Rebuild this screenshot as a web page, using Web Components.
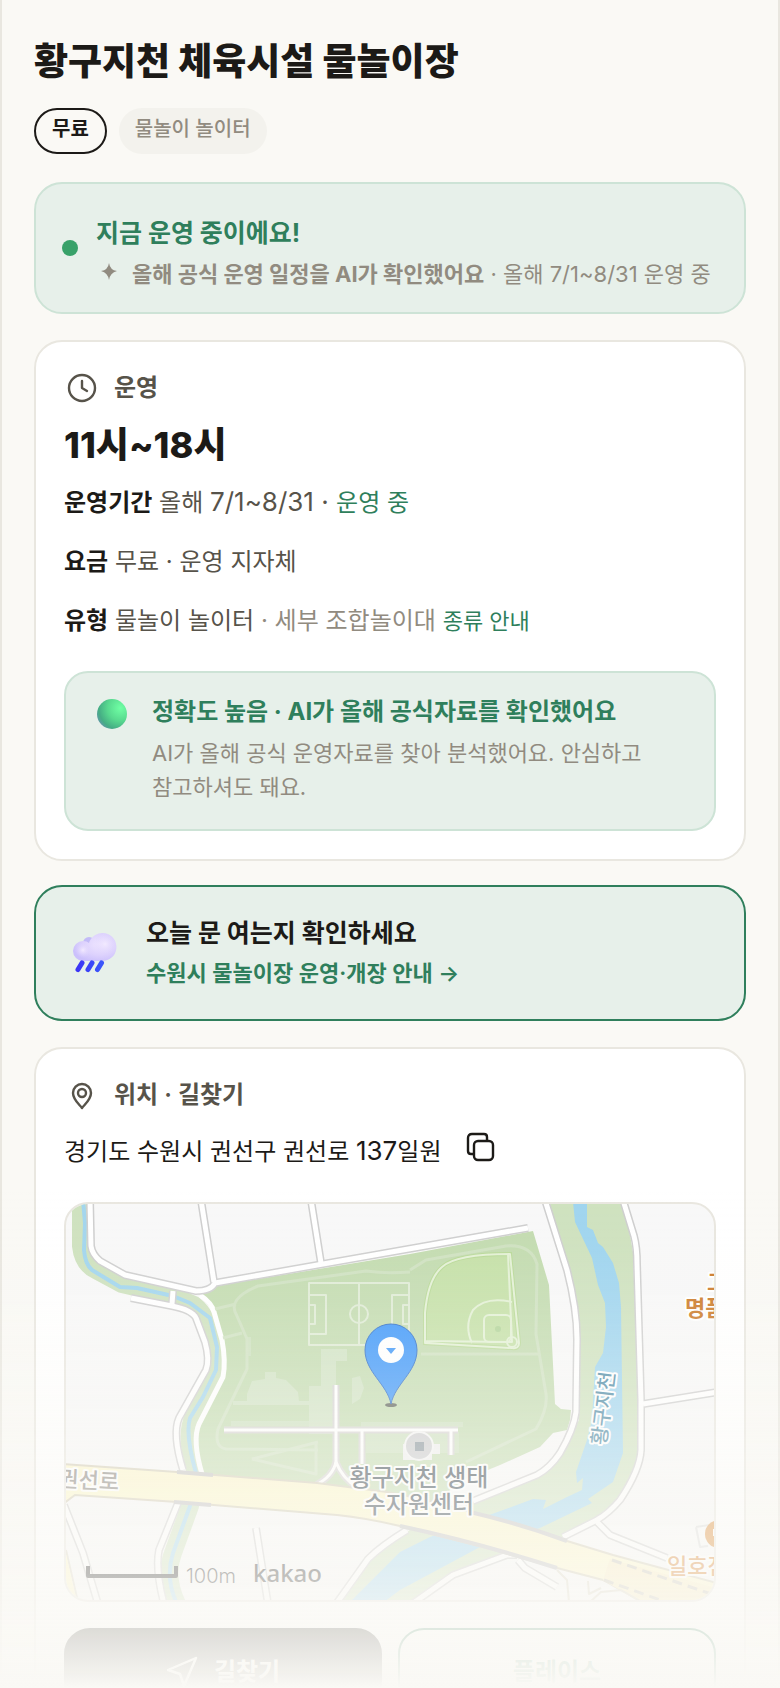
<!DOCTYPE html>
<html lang="ko">
<head>
<meta charset="UTF-8">
<meta name="viewport" content="width=device-width, initial-scale=1">
<title>황구지천 체육시설 물놀이장</title>
<style>
    :root {
        --bg: #faf9f5;
        --line: #e9e7e0;
        --ink: #1c1a17;
        --sub: #57534a;
        --muted: #918b80;
        --green: #2f7f5c;
        --mint: #e7f0ea;
        --mint-line: #cde3d6;
    }
    body {
        margin: 0;
        background: var(--bg);
        color: var(--ink);
        font-family: Inter, "Noto Sans CJK KR", sans-serif;
        font-size: 24px;
        line-height: 44px;
    }
    .muted {
        color: var(--muted);
    }
    .green {
        color: var(--green);
    }
    .num {
        font-size: 26px;
    }
</style>
</head>
<body>

<place-page>
    <place-header>
        <span slot="name">황구지천 체육시설 물놀이장</span>
        <place-badge strong>무료</place-badge>
        <place-badge>물놀이 놀이터</place-badge>
    </place-header>

    <status-banner>
        <span slot="title">지금 운영 중이에요!</span>
        <b>올해 공식 운영 일정을 AI가 확인했어요</b> · 올해 7/1~8/31 운영 중
    </status-banner>

    <info-card icon="clock" label="운영">
        <open-hours>11시~18시</open-hours>
        <fact-row label="운영기간">올해 <span class="num">7/1~8/31 · </span><span class="green">운영 중</span></fact-row>
        <fact-row label="요금">무료 · 운영 지자체</fact-row>
        <fact-row label="유형">물놀이 놀이터 <span class="muted">· 세부 조합놀이대</span> <guide-link>종류 안내</guide-link></fact-row>
        <accuracy-note>
            <span slot="title">정확도 높음 · AI가 올해 공식자료를 확인했어요</span>
            AI가 올해 공식 운영자료를 찾아 분석했어요. 안심하고 참고하셔도 돼요.
        </accuracy-note>
    </info-card>

    <notice-link>
        <span slot="title">오늘 문 여는지 확인하세요</span>
        수원시 물놀이장 운영·개장 안내 →
    </notice-link>

    <info-card icon="pin" label="위치 · 길찾기">
        <address-line>경기도 수원시 권선구 권선로 <span class="num">137</span>일원</address-line>
        <place-map></place-map>
        <action-bar></action-bar>
    </info-card>
</place-page>

<script>
class PlacePage extends HTMLElement {

    constructor() {
        super()
        this.shadowDOM = this.attachShadow({mode : "open"})
    }

    connectedCallback() {
        this.render()
    }

    render() {
        this.shadowDOM.innerHTML = `
            <style>
            :host {
                display: block;
                height: 100vh;
                overflow: hidden;
            }
            main {
                display: flex;
                flex-direction: column;
                gap: 26px;
                padding: 39px 32px 0;
                border: solid var(--line);
                border-width: 0 2px;
            }
            .fade {
                position: fixed;
                left: 0;
                right: 0;
                bottom: 0;
                height: 500px;
                pointer-events: none;
                background: linear-gradient(rgba(250, 249, 245, 0), rgba(250, 249, 245, .03) 12%, rgba(250, 249, 245, .13) 22%, rgba(250, 249, 245, .35) 42%, rgba(250, 249, 245, .54) 58%, rgba(250, 249, 245, .71) 77%, rgba(250, 249, 245, .87) 88%, var(--bg));
            }
            </style>

            <main><slot></slot></main>
            <div class="fade"></div>
        `
    }

}
customElements.define("place-page", PlacePage)

class PlaceHeader extends HTMLElement {

    constructor() {
        super()
        this.shadowDOM = this.attachShadow({mode : "open"})
    }

    connectedCallback() {
        this.shadowDOM.innerHTML = `
            <style>
            :host {
                display: block;
            }
            h1 {
                margin: 0 0 23px;
                font-size: 37px;
                line-height: 46px;
                font-weight: 800;
            }
            .badges {
                display: flex;
                gap: 12px;
            }
            </style>

            <h1><slot name="name"></slot></h1>
            <div class="badges"><slot></slot></div>
        `
    }

}
customElements.define("place-header", PlaceHeader)

class PlaceBadge extends HTMLElement {

    constructor() {
        super()
        this.shadowDOM = this.attachShadow({mode : "open"})
    }

    connectedCallback() {
        this.shadowDOM.innerHTML = `
            <style>
            :host {
                display: block;
                padding: 8px 16px 12px;
                border-radius: 23px;
                background: #f3f2ed;
                color: var(--muted);
                font-size: 20px;
                line-height: 26px;
                font-weight: 500;
            }
            :host([strong]) {
                padding: 6px 16px 10px;
                border: 2px solid var(--ink);
                background: none;
                color: var(--ink);
                font-weight: 700;
            }
            </style>

            <slot></slot>
        `
    }

}
customElements.define("place-badge", PlaceBadge)

class StatusBanner extends HTMLElement {

    constructor() {
        super()
        this.shadowDOM = this.attachShadow({mode : "open"})
    }

    connectedCallback() {
        this.shadowDOM.innerHTML = `
            <style>
            :host {
                display: flex;
                gap: 18px;
                margin-top: 2px;
                padding: 30px 26px 16px;
                border: 2px solid var(--mint-line);
                border-radius: 28px;
                background: var(--mint);
            }
            .dot {
                flex: none;
                width: 16px;
                height: 16px;
                margin-top: 26px;
                border-radius: 50%;
                background: #38a169;
            }
            .title {
                color: var(--green);
                font-size: 25px;
                line-height: 38px;
                font-weight: 700;
            }
            .detail {
                display: flex;
                gap: 8px;
                color: var(--muted);
                font-size: 22px;
            }
            svg {
                flex: none;
                width: 28px;
                height: 40px;
            }
            </style>

            <span class="dot"></span>
            <div>
                <div class="title"><slot name="title"></slot></div>
                <div class="detail">
                    <svg viewBox="0 0 28 40" fill="currentColor"><path d="M13 11q1 7 8 8-7 2-8 9-1-7-8-9 7-1 8-8z"/></svg>
                    <div><slot></slot></div>
                </div>
            </div>
        `
    }

}
customElements.define("status-banner", StatusBanner)

const icons = {
    clock: `<circle cx="18" cy="18" r="13"/><path d="M18 11v7l5 3"/>`,
    pin: `<path d="M18 31c-2-3-9-8-9-15a9 9 0 0 1 18 0c0 7-7 12-9 15z"/><circle cx="18" cy="16" r="4"/>`
}

class InfoCard extends HTMLElement {

    constructor() {
        super()
        this.shadowDOM = this.attachShadow({mode : "open"})
    }

    connectedCallback() {
        this.shadowDOM.innerHTML = `
            <style>
            :host {
                display: block;
                padding: 28px;
                border: 2px solid var(--line);
                border-radius: 28px;
                background: #fff;
            }
            h2 {
                display: flex;
                align-items: center;
                gap: 14px;
                margin: 0 0 16px;
                color: var(--sub);
                font-size: 24px;
                line-height: 36px;
                font-weight: 600;
            }
            svg {
                width: 36px;
                height: 36px;
                fill: none;
                stroke: currentColor;
                stroke-width: 2.4;
                stroke-linecap: round;
                stroke-linejoin: round;
            }
            </style>

            <h2><svg viewBox="0 0 36 36">${icons[this.getAttribute("icon")]}</svg>${this.getAttribute("label")}</h2>
            <slot></slot>
        `
    }

}
customElements.define("info-card", InfoCard)

class OpenHours extends HTMLElement {

    constructor() {
        super()
        this.shadowDOM = this.attachShadow({mode : "open"})
    }

    connectedCallback() {
        this.shadowDOM.innerHTML = `
            <style>
            :host {
                display: block;
                margin-bottom: 12px;
                font-size: 36px;
                line-height: 46px;
                font-weight: 800;
            }
            </style>

            <slot></slot>
        `
    }

}
customElements.define("open-hours", OpenHours)

class FactRow extends HTMLElement {

    constructor() {
        super()
        this.shadowDOM = this.attachShadow({mode : "open"})
    }

    connectedCallback() {
        this.shadowDOM.innerHTML = `
            <style>
            :host {
                display: block;
                margin-bottom: 15px;
                color: var(--sub);
            }
            b {
                color: var(--ink);
            }
            </style>

            <b>${this.getAttribute("label")}</b> <slot></slot>
        `
    }

}
customElements.define("fact-row", FactRow)

class GuideLink extends HTMLElement {

    constructor() {
        super()
        this.shadowDOM = this.attachShadow({mode : "open"})
    }

    connectedCallback() {
        this.shadowDOM.innerHTML = `
            <style>
            :host {
                display: inline;
            }
            a {
                color: var(--green);
                font-size: 22px;
                text-decoration: none;
            }
            </style>

            <a href="#guide"><slot></slot></a>
        `
    }

}
customElements.define("guide-link", GuideLink)

class AccuracyNote extends HTMLElement {

    constructor() {
        super()
        this.shadowDOM = this.attachShadow({mode : "open"})
    }

    connectedCallback() {
        this.shadowDOM.innerHTML = `
            <style>
            :host {
                display: flex;
                gap: 24px;
                margin-top: 28px;
                padding: 22px 30px 25px;
                border: 2px solid var(--mint-line);
                border-radius: 24px;
                background: var(--mint);
                word-break: keep-all;
            }
            svg {
                flex: none;
                width: 32px;
                height: 38px;
            }
            .title {
                margin-bottom: 7px;
                color: var(--green);
                font-size: 24px;
                line-height: 34px;
                font-weight: 700;
            }
            .detail {
                max-width: 500px;
                color: var(--muted);
                font-size: 22px;
                line-height: 34px;
            }
            </style>

            <svg viewBox="0 0 32 38">
                <defs>
                    <radialGradient id="orb" cx=".78" cy=".3" r=".85">
                        <stop offset="0" stop-color="#70ffa4"/>
                        <stop offset=".5" stop-color="#58d98f"/>
                        <stop offset=".85" stop-color="#45ad84"/>
                        <stop offset="1" stop-color="#5f9aa5"/>
                    </radialGradient>
                </defs>
                <circle cx="16" cy="19" r="15" fill="url(#orb)"/>
            </svg>
            <div>
                <div class="title"><slot name="title"></slot></div>
                <div class="detail"><slot></slot></div>
            </div>
        `
    }

}
customElements.define("accuracy-note", AccuracyNote)

class NoticeLink extends HTMLElement {

    constructor() {
        super()
        this.shadowDOM = this.attachShadow({mode : "open"})
    }

    connectedCallback() {
        this.shadowDOM.innerHTML = `
            <style>
            :host {
                display: block;
                margin-top: -2px;
            }
            a {
                display: flex;
                align-items: center;
                gap: 22px;
                padding: 26px 28px;
                border: 2px solid var(--green);
                border-radius: 28px;
                background: var(--mint);
                color: var(--green);
                font-size: 22px;
                line-height: 40px;
                font-weight: 600;
                text-decoration: none;
            }
            svg {
                flex: none;
                width: 60px;
                height: 60px;
            }
            .title {
                color: var(--ink);
                font-size: 25px;
                font-weight: 700;
            }
            </style>

            <a href="#notice">
                <svg viewBox="0 0 60 60">
                    <defs>
                        <radialGradient id="puff" cx=".62" cy=".4" r=".65">
                            <stop offset="0" stop-color="#efe6ff"/>
                            <stop offset=".6" stop-color="#ddd2fd"/>
                            <stop offset="1" stop-color="#cbc0fc"/>
                        </radialGradient>
                        <radialGradient id="shine">
                            <stop offset="0" stop-color="#f2eaff"/>
                            <stop offset="1" stop-color="#ddd2fd" stop-opacity="0"/>
                        </radialGradient>
                        <linearGradient id="drop" x1="0" x2="1">
                            <stop offset="0" stop-color="#3b35f5"/>
                            <stop offset="1" stop-color="#3b55fa"/>
                        </linearGradient>
                    </defs>
                    <circle cx="25" cy="20" r="6" fill="#c3bbf8"/>
                    <path d="M19 38A10 10 0 0 1 19 18Q23 18 25 20A14 14 0 1 1 38 38z" fill="url(#puff)"/>
                    <circle cx="41" cy="21" r="11" fill="url(#shine)"/>
                    <circle cx="19" cy="27" r="8" fill="url(#shine)"/>
                    <g stroke="url(#drop)" stroke-width="5" stroke-linecap="round">
                        <path d="M18 40l-4 6.500M28 40l-4 6.500M37.500 40l-4 6.500"/>
                    </g>
                </svg>
                <div>
                    <div class="title"><slot name="title"></slot></div>
                    <slot></slot>
                </div>
            </a>
        `
    }

}
customElements.define("notice-link", NoticeLink)

class AddressLine extends HTMLElement {

    constructor() {
        super()
        this.shadowDOM = this.attachShadow({mode : "open"})
    }

    connectedCallback() {
        this.shadowDOM.innerHTML = `
            <style>
            :host {
                display: flex;
                gap: 20px;
                margin-bottom: 28px;
            }
            button {
                width: 36px;
                height: 36px;
                padding: 0;
                border: 0;
                background: none;
                color: var(--ink);
            }
            svg {
                display: block;
                fill: none;
                stroke: currentColor;
                stroke-width: 2.400;
                stroke-linejoin: round;
            }
            </style>

            <span><slot></slot></span>
            <button type="button" aria-label="주소 복사">
                <svg width="36" height="36" viewBox="0 0 36 36">
                    <rect x="12" y="12" width="19" height="19" rx="4"/>
                    <path d="M12 25H9q-3 0-3-3V9q0-4 4-4h12q3 0 3 3v3"/>
                </svg>
            </button>
        `
    }

}
customElements.define("address-line", AddressLine)

// roads are drawn twice: a grey casing first, the white surface over it
const roads = `
    <path d="M24-4L25 42Q26 50 34 57L59 71 130 87Q145 87 149 79L462 24"/>
    <path d="M135-4L148 78M245-4L255 59M107 87L106 100"/>
    <path d="M65 94L106 102Q126 106 130 114L139 138Q144 156 140 166L113 214Q106 230 117 266"/>
    <path d="M479-4L501 66Q511 105 511 135L510 208Q508 225 494 249 484 264 471 271L407 297"/>
    <path d="M557-4L568 32Q571 43 571 60L575 196V246Q574 266 554 296 543 309 531 316L497 333"/>
    <path d="M577 200L652 188M531 318L544 331 601 354"/>
    <path d="M341 326Q315 342 302 355L270 400M451 351H441L387 371 346 400M452 356L459 364 491 383"/>
    <path d="M-2 301L17 349 32 400M112 299L93 346Q89 365 98 400M190 324L202 400"/>
`
const parkRoads = `
    <path d="M158 226H392M270 181V262M296 226V260M385 226V251"/>
    <path d="M270 258Q267 272 250 281M270 258Q276 274 292 284"/>
`

class PlaceMap extends HTMLElement {

    constructor() {
        super()
        this.shadowDOM = this.attachShadow({mode : "open"})
    }

    connectedCallback() {
        this.render()
    }

    render() {
        this.shadowDOM.innerHTML = `
            <style>
            :host {
                display: block;
                overflow: hidden;
                height: 396px;
                border: 2px solid var(--line);
                border-radius: 24px;
                background: #f8f8f8;
            }
            svg {
                display: block;
                width: 100%;
                height: 100%;
            }
            .line {
                fill: none;
                stroke-linejoin: round;
            }
            text {
                font-family: Inter, "Noto Sans CJK KR", sans-serif;
                paint-order: stroke;
                stroke: #fff;
                stroke-width: 4;
                stroke-linejoin: round;
            }
            .plain {
                stroke: none;
            }
            </style>

            <svg viewBox="0 0 648 396" preserveAspectRatio="xMidYMid slice" role="img" aria-label="지도">
                <!-- west stream -->
                <g class="line">
                    <path d="M15-4V42Q17 60 30 66L56 80 107 92 128 101Q142 112 148 140V166L128 212Q118 232 130 269L124 302 107 349Q98 372 111 400" stroke="#cfe2bf" stroke-width="18"/>
                    <path d="M17-4L19 19 18 46Q19 60 26 66L54 83 71 84 107 92 124 99 144 114 151 143 150 166 137 193 124 214Q119 230 130 269L124 302 107 349Q99 374 111 400" stroke="#a3d6ee" stroke-width="4"/>
                </g>
                <!-- river -->
                <path d="M483-4L507 83 514 133 513 216 497 246 474 271 407 298 344 326 302 353 272 400H342L387 369 441 351 497 333 544 309 564 286 572 263 573 216 567 48 564 31 554-4z" fill="#cfe2bf"/>
                <path d="M507-2L509 18 526 54 532 81 539 99 540 123 537 149 529 163 526 216 521 236 510 268 511 279 517 274 516 286 501 293 477 305 480 296 467 295 426 310 364 333 334 348 284 398H318L334 386 414 343 474 324 526 299 522 295 547 278 557 249 555 103 553 79 547 59 537 43 532 39 527 26 521 23V-2z" fill="#a0d5ef"/>
                <!-- park -->
                <path d="M149 82L344 50 467 27 483 81 489 200 495 205 505 206 504 216 501 226 487 229 474 243 434 261 400 275 350 310 136 275 129 229 157 173 158 150 150 110 134 92z" fill="#c4dcb1"/>
                <path d="M134 91Q146 99 148 108L156 136Q160 158 157 173L133 220Q126 236 136 270" class="line" stroke="#fff" stroke-width="5"/>
                <g fill="#d1e3c4">
                    <path d="M181 190L186 177 199 175V168H210V174L220 176 232 188 233 197H181zM255 145H281V157H270V198H255zM243 182H270V230H243zM286 174L294 172 298 184 294 195 286 200zM167 197H245V201H167z"/>
                    <path d="M295 218H397V223H295zM165 217H243V222H165zM300 228H393V249H300zM180 133H185V152H180z" opacity=".7"/>
                </g>
                <g class="line" stroke="#d0e2c2" stroke-width="3">
                    <path d="M149 105L170 100M157 134L176 129M344 68Q320 70 300 67L192 82Q160 95 171 112L181 135V165L152 225Q148 243 160 245L252 246M344 66L360 56 440 42Q465 40 471 60L470 130 480 190Q482 205 470 225L400 258M355 150H474M186 255L252 238M186 255L250 270V238"/>
                </g>
                <g class="line" stroke="#e0ecd6" stroke-width="2">
                    <path d="M243 79H343V141H243zM293 79V141M243 91H260V130H243M243 101H249V120H243M343 91H326V130H343M343 101H337V120H343"/>
                    <circle cx="293" cy="110" r="9"/>
                </g>
                <path d="M359 139V109Q362 75 376 63 390 50 444 50L453 139Q453 145 446 144z" fill="#c6e1a9" stroke="#b9d998" stroke-width="4"/>
                <g class="line" stroke="#e4f1d6" stroke-width="2">
                    <path d="M359 139V109Q362 75 376 63 390 50 444 50L453 139Q453 145 446 144zM442 50L446 138 359 137M406 139Q398 122 407 106 420 92 446 98"/>
                    <rect x="418" y="111" width="27" height="27" rx="5"/>
                    <circle cx="446" cy="138" r="5"/>
                </g>
                <circle cx="432" cy="125" r="3" fill="#b3d59b"/>
                <!-- streets -->
                <g class="line" stroke="#cfcfcf" stroke-width="8">${roads}</g>
                <g class="line" stroke="#fff" stroke-width="5">${roads}</g>
                <g class="line" stroke="#d6d4d3" stroke-width="7">${parkRoads}</g>
                <g class="line" stroke="#fff" stroke-width="3">${parkRoads}</g>
                <!-- main road and its bridges -->
                <path d="M-3 260L111 268 251 279 321 288Q370 297 404 308L454 321 501 337 547 351 651 379V400H580L537 376 491 364 417 343 334 322Q300 314 271 311L111 298 9 291-3 300z" fill="#fdf7c9" stroke="#d3cdb6" stroke-width="2"/>
                <path d="M544 355L537 376 574 398H650V384z" fill="#fbeec1"/>
                <path d="M546 356L645 390M538 376L600 398" class="line" stroke="#c9c5b8" stroke-width="3" stroke-dasharray="10 6"/>
                <path d="M491 366L501 376 503 398M522 377L523 390 535 384M524 398L535 388 555 386 574 397M0 346L12 398" class="line" stroke="#ddd8c8" stroke-width="2"/>
                <path d="M0 350L11 398H0z" fill="#fdf7c9"/>
                <path d="M111 268L147 271M108 298L145 301M404 308Q455 320 501 337M334 322Q410 338 491 364" class="line" stroke="#c4c3c2" stroke-width="4"/>
                <!-- facility -->
                <path d="M337 240H374V250H366V256H337z" fill="#efefef"/>
                <circle cx="353" cy="242" r="14" fill="#cbccce" stroke="#f4f4f4" stroke-width="2"/>
                <rect x="349" y="238" width="9" height="9" fill="#85929a"/>
                <path d="M630 323L643 321M630 323L634 343 642 342" class="line" stroke="#ddd" stroke-width="2"/>
                <circle cx="653" cy="330" r="14" fill="#dd8f3d"/>
                <rect x="647" y="325" width="6" height="7" fill="#fff"/>
                <!-- labels -->
                <g font-size="24" font-weight="500" fill="#3a4851" text-anchor="middle">
                    <text x="353" y="282">황구지천 생태</text>
                    <text x="353" y="309">수자원센터</text>
                </g>
                <text x="502" y="213" transform="rotate(-83 537 206)" font-size="20" font-weight="500" fill="#4d8aa6">황구지천</text>
                <text x="-8" y="283" transform="rotate(3 0 283)" font-size="22" font-weight="500" fill="#85817a">권선로</text>
                <g font-size="22" font-weight="600" fill="#cb7a28">
                    <text x="641" y="86">고</text>
                    <text x="619" y="112">명품</text>
                    <text x="601" y="370" font-weight="500" fill="#d98633">일호점</text>
                </g>
                <path d="M22 362V372H110V362" class="line" stroke="#333" stroke-width="4"/>
                <g fill="#333">
                    <text class="plain" x="120" y="379" font-size="20" font-weight="300">100m</text>
                    <text class="plain" x="187" y="378" font-size="24" font-weight="500" style="font-family: 'Noto Sans', sans-serif">kakao</text>
                </g>
                <!-- marker -->
                <ellipse cx="325" cy="201" rx="6" ry="2" fill="#444" opacity=".8"/>
                <path d="M325 200C321 180 299 168 299 146A26 26 0 0 1 351 146C351 168 329 180 325 200z" fill="#3f98fa" stroke="#2f6fc8"/>
                <circle cx="325" cy="146" r="13" fill="#fff"/>
                <path d="M320 144H330L325 150z" fill="#3f98fa"/>
            </svg>
        `
    }

}
customElements.define("place-map", PlaceMap)

class ActionBar extends HTMLElement {

    constructor() {
        super()
        this.shadowDOM = this.attachShadow({mode : "open"})
    }

    connectedCallback() {
        this.shadowDOM.innerHTML = `
            <style>
            :host {
                display: grid;
                grid-template-columns: 1fr 1fr;
                gap: 16px;
                margin-top: 26px;
            }
            button {
                display: flex;
                align-items: center;
                justify-content: center;
                gap: 16px;
                height: 88px;
                border: 2px solid var(--green);
                border-radius: 26px;
                background: #fff;
                color: var(--green);
                font: inherit;
                font-weight: 700;
            }
            .primary {
                border-color: var(--ink);
                background: var(--ink);
                color: #fff;
            }
            svg {
                fill: none;
                stroke: currentColor;
                stroke-width: 2.400;
                stroke-linejoin: round;
            }
            </style>

            <button type="button" class="primary">
                <svg width="32" height="32" viewBox="0 0 32 32"><path d="M30 2L18 30 14 18 2 14z"/></svg>
                길찾기
            </button>
            <button type="button">플레이스</button>
        `
    }

}
customElements.define("action-bar", ActionBar)
</script>
</body>
</html>
